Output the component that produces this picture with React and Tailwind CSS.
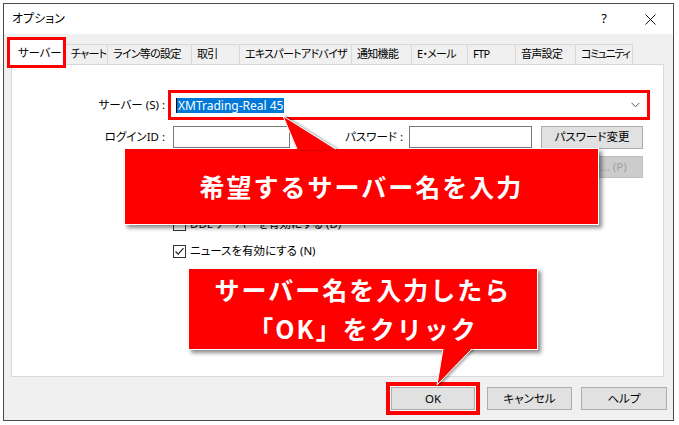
import React from 'react'

const TABS = [
  { label: 'チャート', w: 'w-[42px]', t: 'tracking-[-0.7px]' },
  { label: 'ライン等の設定', w: 'w-[84px]', t: 'tracking-[-0.7px]' },
  { label: '取引', w: 'w-[48px]', t: 'tracking-[-0.7px]' },
  { label: 'エキスパートアドバイザ', w: 'w-[112px]', t: 'tracking-[-0.7px]' },
  { label: '通知機能', w: 'w-[60px]', t: 'tracking-[-0.7px]' },
  { label: 'E・メール', w: 'w-[56px]', t: 'tracking-[-0.7px]' },
  { label: 'FTP', w: 'w-[48px]', t: 'tracking-[-0.7px]' },
  { label: '音声設定', w: 'w-[60px]', t: 'tracking-[-0.7px]' },
  { label: 'コミュニティ', w: 'w-[57px]', t: 'tracking-[-1.4px]' },
]

function Checkbox({ checked }) {
  return (
    <span className="flex h-[13px] w-[13px] shrink-0 items-center justify-center border border-[#333333] bg-white">
      {checked && (
        <svg width="11" height="11" viewBox="0 0 11 11">
          <path d="M1.5 5.5 L4.2 8.2 L9.5 2.2" fill="none" stroke="#222" strokeWidth="1.2" />
        </svg>
      )}
    </span>
  )
}

function Button({ children, className = '' }) {
  return (
    <div
      className={`flex h-[23px] items-center justify-center whitespace-nowrap border border-[#adadad] bg-[#e1e1e1] text-black ${className}`}
    >
      {children}
    </div>
  )
}

export default function App() {
  return (
    <div className="relative h-[425px] w-[679px] overflow-hidden bg-white font-['Noto_Sans','Noto_Sans_CJK_JP',sans-serif] text-[11.5px] text-black [font-feature-settings:'palt']">
      {/* window */}
      <div className="ml-[3px] mt-[3px] flex h-[418px] w-[671px] flex-col border border-[#4a4a4a] bg-[#f0f0f0]">
        {/* title bar */}
        <div className="flex h-[30px] shrink-0 items-center bg-white">
          <span className="pl-[8px] text-[12px]">オプション</span>
          <div className="ml-auto flex h-full">
            <div className="flex w-[46px] items-center justify-center text-[13px]">?</div>
            <div className="flex w-[46px] items-center justify-center">
              <svg width="11" height="11" viewBox="0 0 11 11">
                <path d="M0.5 0.5 L10.5 10.5 M10.5 0.5 L0.5 10.5" stroke="#111" strokeWidth="1" />
              </svg>
            </div>
          </div>
        </div>

        {/* body */}
        <div className="flex flex-1 flex-col pl-[7px]">
          {/* tabs */}
          <div className="mt-[3px] flex h-[27px] items-end">
            <div className="relative z-10 ml-[-4px] mb-[-4px] h-[31px] w-[59px] shrink-0 border-[3px] border-[#ff0000] bg-white">
              <div className="flex h-full items-center whitespace-nowrap pl-[8px] text-[11.5px] tracking-[-0.2px]">
                サーバー
              </div>
            </div>
            {TABS.map((t) => (
              <div
                key={t.label}
                className={`flex h-[20px] shrink-0 items-center overflow-hidden whitespace-nowrap border-r border-t border-[#d9d9d9] bg-[#f0f0f0] pl-[5px] text-[11px] ${t.t} ${t.w}`}
              >
                {t.label}
              </div>
            ))}
          </div>

          {/* panel */}
          <div className="flex h-[313px] w-[653px] flex-col border border-[#d9d9d9] bg-white">
            {/* server row */}
            <div className="mt-[25px] flex h-[30px] items-center">
              <div className="w-[153px] text-right">サーバー (S) :</div>
              <div className="ml-[3px] flex h-[30px] w-[482px] items-center border-[3px] border-[#ff0000] bg-white pl-[5px]">
                <span className="h-[15px] w-px bg-black" />
                <span className="bg-[#0078d7] px-[1px] text-[12px] leading-[15px] text-white">XMTrading-Real 45</span>
                <svg className="ml-auto mr-[7px]" width="9" height="6" viewBox="0 0 9 6">
                  <path d="M0.5 0.8 L4.5 4.8 L8.5 0.8" fill="none" stroke="#555" strokeWidth="1" />
                </svg>
              </div>
            </div>

            {/* login row */}
            <div className="mt-[6px] flex h-[22px] items-center">
              <div className="w-[153px] text-right">ログインID :</div>
              <div className="ml-[8px] h-[22px] w-[117px] border border-[#7a7a7a] bg-white" />
              <div className="w-[113px] text-right">パスワード :</div>
              <div className="ml-[6px] h-[22px] w-[123px] border border-[#7a7a7a] bg-white" />
              <Button className="ml-[9px] h-[22px] w-[102px]">パスワード変更</Button>
            </div>

            {/* proxy button */}
            <div className="mt-[8px] flex h-[22px] items-center justify-end pr-[20px]">
              <div className="flex h-[22px] w-[102px] items-center justify-center border border-[#bfbfbf] bg-[#cccccc] text-[#a0a0a0]">
                プロキシ... (P)
              </div>
            </div>

            {/* checkboxes */}
            <div className="ml-[161px] mt-[38px] flex h-[16px] items-center gap-[4px]">
              <Checkbox />
              <span>DDEサーバーを有効にする (D)</span>
            </div>
            <div className="ml-[161px] mt-[11px] flex h-[16px] items-center gap-[4px]">
              <Checkbox checked />
              <span>ニュースを有効にする (N)</span>
            </div>
          </div>

          {/* buttons */}
          <div className="mt-[5px] flex h-[33px] items-center justify-end pr-[6px]">
            <div className="flex h-[33px] w-[94px] items-center justify-center border-[4px] border-[#ff0000] bg-white">
              <Button className="w-[84px] border-[#0078d7]">OK</Button>
            </div>
            <Button className="ml-[7px] w-[85px]">キャンセル</Button>
            <Button className="ml-[9px] w-[86px]">ヘルプ</Button>
          </div>
        </div>
      </div>

      {/* callout 1 */}
      <div className="absolute left-[124px] top-[148px] flex h-[77px] w-[475px] items-center justify-center border border-white bg-[#ff0000] shadow-[3px_3px_4px_rgba(0,0,0,0.45)] [font-feature-settings:normal]">
        <span className="font-['Noto_Sans_CJK_JP',sans-serif] text-[25px] font-bold tracking-[2px] text-white">
          希望するサーバー名を入力
        </span>
      </div>
      <svg className="absolute left-[278px] top-[112px] drop-shadow-[2px_0px_1px_rgba(0,0,0,0.35)]" width="64" height="40" viewBox="0 0 64 40">
        <polygon points="5,4 19,38 58,38" fill="#ff0000" />
        <polyline points="19,37 5,4 58,37" fill="none" stroke="#ffffff" strokeWidth="1" />
      </svg>

      {/* callout 2 */}
      <div className="absolute left-[188px] top-[268px] flex h-[82px] w-[350px] flex-col items-center justify-center border border-white bg-[#ff0000] shadow-[3px_3px_4px_rgba(0,0,0,0.45)] [font-feature-settings:normal]">
        <span className="font-['Noto_Sans_CJK_JP',sans-serif] text-[25px] font-bold leading-[39px] tracking-[2px] text-white">
          サーバー名を入力したら
        </span>
        <span className="font-['Noto_Sans_CJK_JP',sans-serif] text-[25px] font-bold leading-[39px] tracking-[2px] text-white">
          「OK」をクリック
        </span>
      </div>
      <svg className="absolute left-[432px] top-[346px] drop-shadow-[2px_1px_1px_rgba(0,0,0,0.35)]" width="46" height="42" viewBox="0 0 46 42">
        <polygon points="11,2 40,2 5,39" fill="#ff0000" />
        <polyline points="11,3 5,39 40,3" fill="none" stroke="#ffffff" strokeWidth="1" />
      </svg>
    </div>
  )
}
